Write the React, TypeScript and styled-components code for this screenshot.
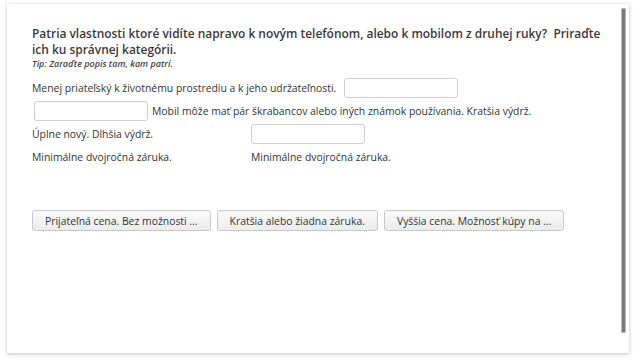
import React from "react";
import styled, { createGlobalStyle } from "styled-components";

const Global = createGlobalStyle`
  html, body { margin: 0; padding: 0; background: #ffffff; }
  body { font-family: "Open Sans", "Liberation Sans", sans-serif; color: #333; }
`;

const Page = styled.div`
  width: 636px;
  height: 364px;
  padding: 4px 7px 11px 7px;
  box-sizing: border-box;
`;

const Card = styled.div`
  position: relative;
  height: 100%;
  background: #fff;
  box-shadow: 0 1px 4px rgba(0, 0, 0, 0.25);
  padding: 22px 18px 0 25px;
  box-sizing: border-box;
`;

const Scrollbar = styled.div`
  position: absolute;
  top: 4px;
  right: 3px;
  width: 3px;
  height: 323px;
  background: #7a7a7a;
  border: 1px solid #bbb;
  border-radius: 1px;
`;

const Question = styled.h1`
  margin: 0;
  font-size: 11.95px;
  font-weight: 600;
  line-height: 16px;
  color: #3a3a3a;
`;

const Tip = styled.div`
  font-size: 9px;
  font-style: italic;
  font-weight: 600;
  color: #444;
  margin-top: 0;
  line-height: 11px;
`;

const Rows = styled.div`
  margin-top: 9px;
  display: flex;
  flex-direction: column;
  gap: 3px;
  font-size: 10.4px;
  line-height: 14px;
`;

const Line = styled.div<{ $gap: number }>`
  display: flex;
  align-items: center;
  gap: ${(p) => p.$gap}px;
  min-height: 20px;
`;

const GridLine = styled.div`
  display: grid;
  grid-template-columns: 219px 1fr;
  align-items: center;
  min-height: 20px;
`;

const Drop = styled.div<{ $ml?: number }>`
  width: 114px;
  height: 20px;
  box-sizing: border-box;
  border: 1px solid #cfcfcf;
  border-radius: 3px;
  background: #fff;
  margin-left: ${(p) => p.$ml ?? 0}px;
  flex: none;
`;

const Buttons = styled.div`
  display: flex;
  gap: 6px;
  margin-top: 43px;
`;

const Btn = styled.button`
  font-family: "Open Sans", "Liberation Sans", sans-serif;
  font-size: 10.4px;
  color: #333;
  height: 21px;
  padding: 0 12px;
  border: 1px solid #c8c8c8;
  border-radius: 3px;
  background: linear-gradient(#fafafa, #ececec);
  cursor: pointer;
`;

export default function App() {
  return (
    <>
      <Global />
      <Page>
        <Card>
          <Scrollbar />
          <Question>
            Patria vlastnosti ktoré vidíte napravo k novým telefónom, alebo k mobilom z druhej ruky?&nbsp; Priraďte ich ku správnej kategórii.
          </Question>
          <Tip>Tip: Zaraďte popis tam, kam patrí.</Tip>
          <Rows>
            <Line $gap={8}>
              <span>Menej priateľský k životnému prostrediu a k jeho udržateľnosti.</span>
              <Drop />
            </Line>
            <Line $gap={4}>
              <Drop $ml={2} />
              <span>Mobil môže mať pár škrabancov alebo iných známok používania. Kratšia výdrž.</span>
            </Line>
            <GridLine>
              <span>Úplne nový. Dlhšia výdrž.</span>
              <Drop />
            </GridLine>
            <GridLine>
              <span>Minimálne dvojročná záruka.</span>
              <span>Minimálne dvojročná záruka.</span>
            </GridLine>
          </Rows>
          <Buttons>
            <Btn>Prijateľná cena. Bez možnosti ...</Btn>
            <Btn>Kratšia alebo žiadna záruka.</Btn>
            <Btn>Vyššia cena. Možnosť kúpy na ...</Btn>
          </Buttons>
        </Card>
      </Page>
    </>
  );
}
